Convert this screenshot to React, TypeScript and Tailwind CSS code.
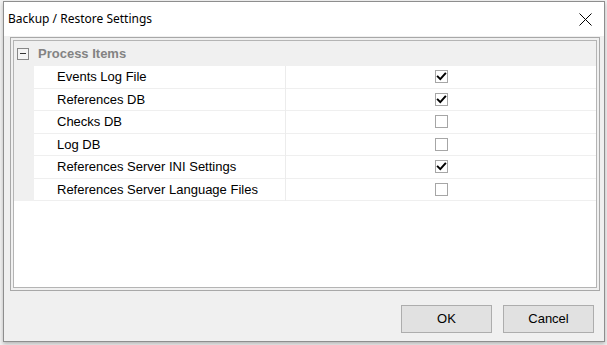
import React from "react";

const rows: { label: string; checked: boolean }[] = [
  { label: "Events Log File", checked: true },
  { label: "References DB", checked: true },
  { label: "Checks DB", checked: false },
  { label: "Log DB", checked: false },
  { label: "References Server INI Settings", checked: true },
  { label: "References Server Language Files", checked: false },
];

function CheckBox({ checked }: { checked: boolean }) {
  return (
    <div className="w-[13px] h-[13px] border border-[#a6a6a6] bg-white flex items-center justify-center">
      {checked && (
        <svg width="11" height="11" viewBox="0 0 11 11">
          <path d="M1.8 5.6 L4.3 8.1 L9.2 2.6" fill="none" stroke="#000" strokeWidth="2" strokeLinecap="square" />
        </svg>
      )}
    </div>
  );
}

export default function App() {
  return (
    <div
      className="w-[607px] h-[345px] bg-[#f2f2f2] overflow-hidden pt-[1px]"
      style={{ fontFamily: '"Liberation Sans", Arial, sans-serif' }}
    >
      <div className="ml-[3px] w-[602px] h-[341px] border border-[#8e8e8e] bg-[#f0f0f0] flex flex-col shadow-[0_2px_4px_rgba(0,0,0,0.25)]">
        {/* Title bar */}
        <div className="h-[34px] bg-white flex items-center justify-between pl-[4px] pr-[12px]">
          <span
            className="text-[12px] text-black leading-none"
            style={{ fontFamily: '"Noto Sans", "Liberation Sans", sans-serif' }}
          >
            Backup / Restore Settings
          </span>
          <svg width="13" height="13" viewBox="0 0 13 13">
            <path d="M0.5 0.5 L12.5 12.5 M12.5 0.5 L0.5 12.5" stroke="#000" strokeWidth="1" />
          </svg>
        </div>

        {/* Body */}
        <div className="flex-1 flex flex-col">
          <div className="ml-[6px] mt-[1px] w-[590px] h-[254px] border border-[#a8a8a8] p-[2px] bg-[#f0f0f0]">
            <div className="w-full h-full border border-[#b4b4b4] bg-white flex flex-col">
              {/* Category header */}
              <div className="h-[25px] bg-[#f0f0f0] flex items-center pl-[3px]">
                <div className="w-[12px] h-[12px] border border-[#888888] bg-[#f4f4f4] flex items-center justify-center">
                  <div className="w-[6px] h-[1px] bg-[#333]" />
                </div>
                <span className="ml-[9px] text-[13px] font-bold text-[#838383] leading-none">Process Items</span>
              </div>
              {rows.map((r) => (
                <div key={r.label} className="h-[22.5px] flex">
                  <div className="w-[20px] bg-[#f0f0f0]" />
                  <div className="w-[251px] border-b border-[#efefef] flex items-center pl-[23px] text-[13px] text-black">
                    {r.label}
                  </div>
                  <div className="w-[1px] bg-[#ececec]" />
                  <div className="flex-1 border-b border-[#efefef] flex items-center justify-center">
                    <CheckBox checked={r.checked} />
                  </div>
                </div>
              ))}
            </div>
          </div>

          {/* Buttons */}
          <div className="flex justify-end gap-[11px] pr-[10px] mt-[14px]">
            <button className="w-[91px] h-[28px] bg-[#e1e1e1] border border-[#adadad] text-[13px] text-black">
              OK
            </button>
            <button className="w-[91px] h-[28px] bg-[#e1e1e1] border border-[#adadad] text-[13px] text-black">
              Cancel
            </button>
          </div>
        </div>
      </div>
    </div>
  );
}
